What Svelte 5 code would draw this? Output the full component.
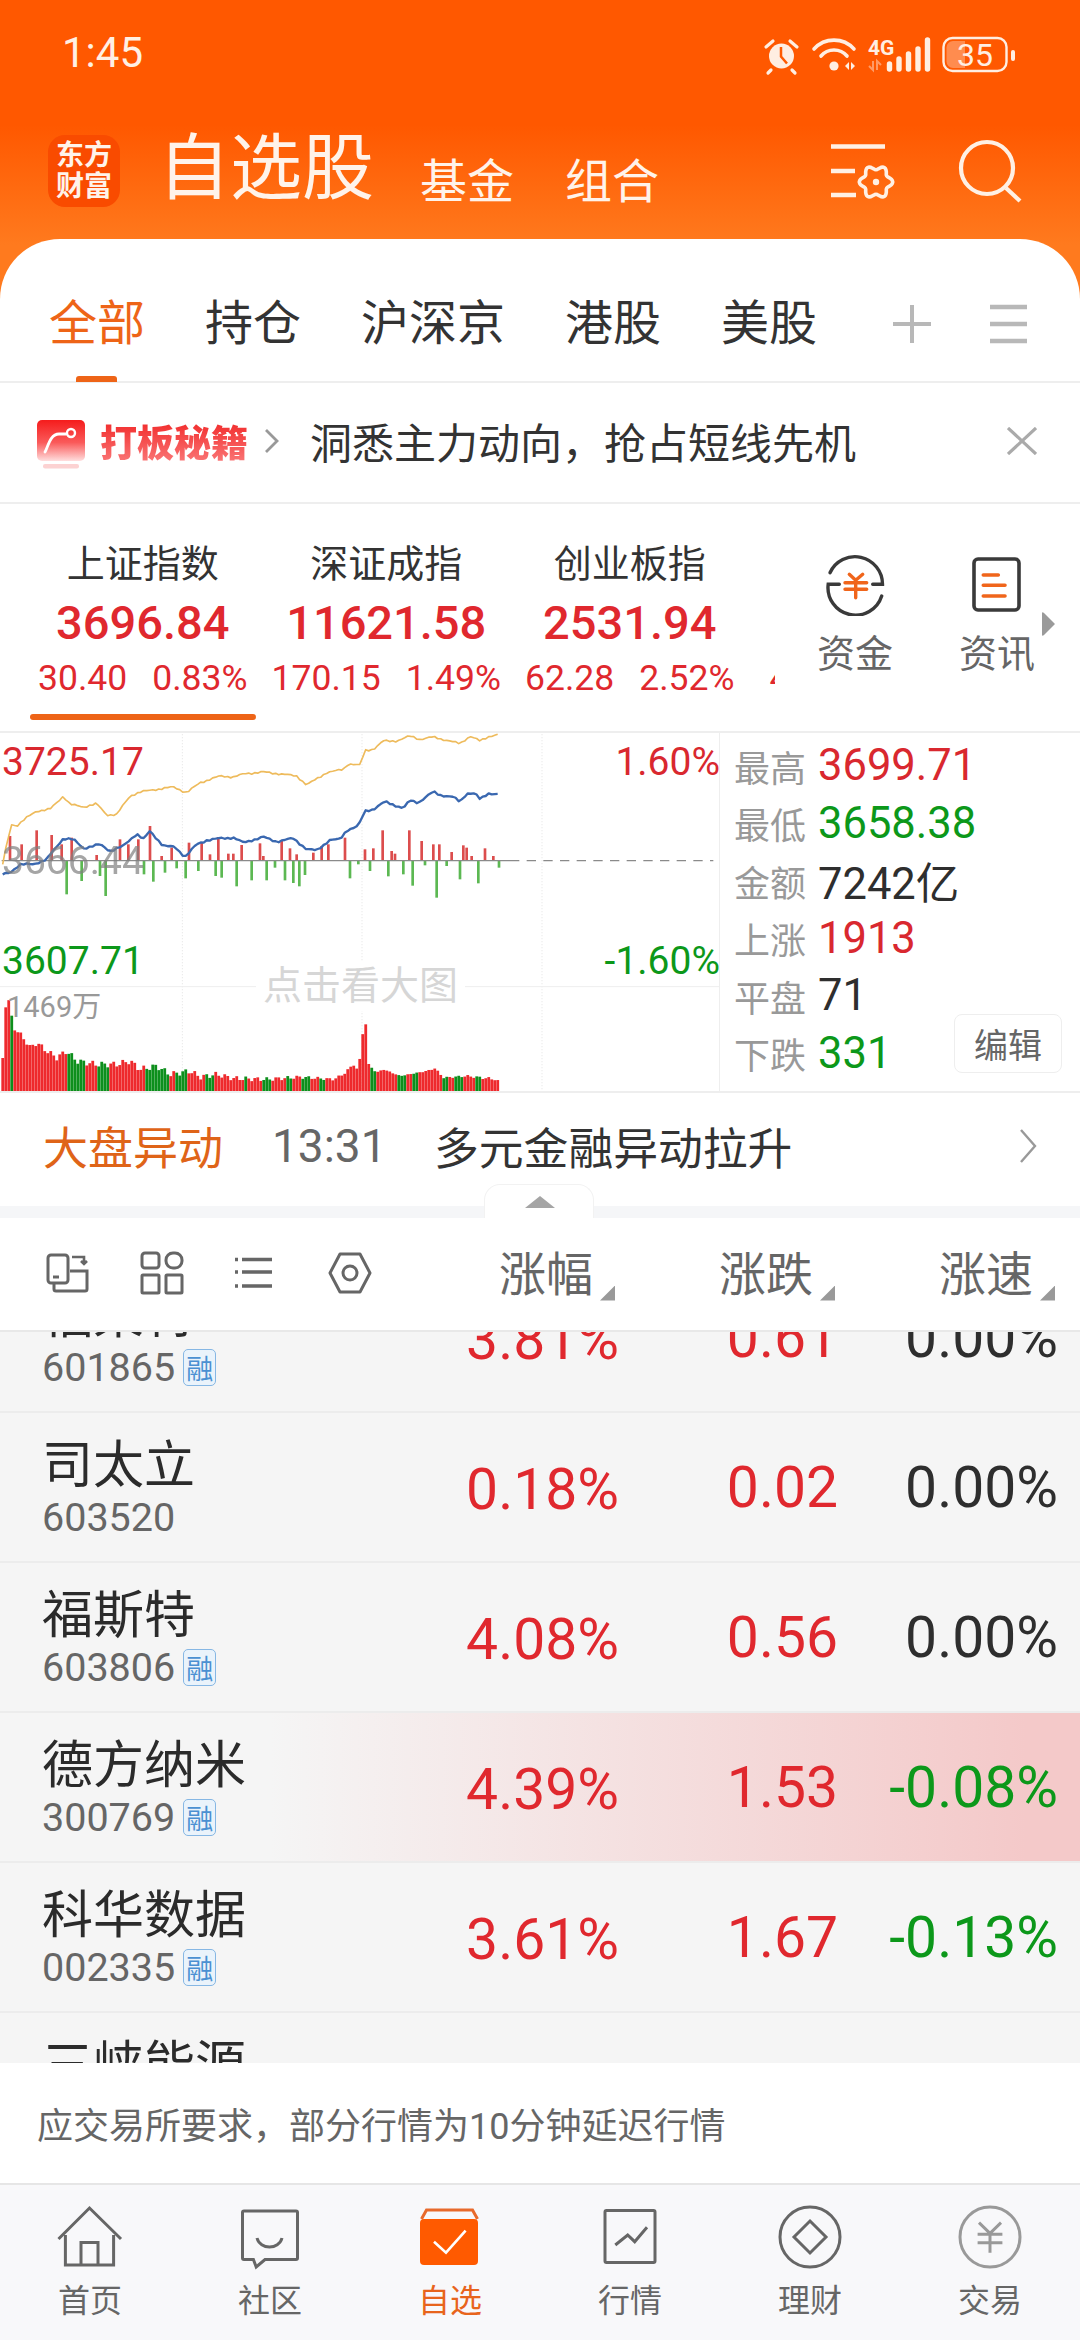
<script lang="ts">
  const topTabs = [
    { label: "全部", active: true },
    { label: "持仓" },
    { label: "沪深京" },
    { label: "港股" },
    { label: "美股" },
  ];

  const indexes = [
    { name: "上证指数", value: "3696.84", diff: "30.40", pct: "0.83%", active: true },
    { name: "深证成指", value: "11621.58", diff: "170.15", pct: "1.49%" },
    { name: "创业板指", value: "2531.94", diff: "62.28", pct: "2.52%" },
  ];

  const stats = [
    { label: "最高", value: "3699.71", tone: "up" },
    { label: "最低", value: "3658.38", tone: "down" },
    { label: "金额", value: "7242亿", tone: "flat" },
    { label: "上涨", value: "1913", tone: "up" },
    { label: "平盘", value: "71", tone: "flat" },
    { label: "下跌", value: "331", tone: "down" },
  ];

  const stocks = [
    { name: "福莱特", code: "601865", margin: true, pct: "3.81%", diff: "0.61", speed: "0.00%", speedTone: "flat" },
    { name: "司太立", code: "603520", margin: false, pct: "0.18%", diff: "0.02", speed: "0.00%", speedTone: "flat" },
    { name: "福斯特", code: "603806", margin: true, pct: "4.08%", diff: "0.56", speed: "0.00%", speedTone: "flat" },
    { name: "德方纳米", code: "300769", margin: true, pct: "4.39%", diff: "1.53", speed: "-0.08%", speedTone: "down", hot: true },
    { name: "科华数据", code: "002335", margin: true, pct: "3.61%", diff: "1.67", speed: "-0.13%", speedTone: "down" },
    { name: "三峡能源", code: "600905", margin: true, pct: "", diff: "", speed: "", speedTone: "flat" },
  ];

  const navItems = ["首页", "社区", "自选", "行情", "理财", "交易"];

  // chart data is in chart units: 3 units = 1px
  const yellowPts = [[8,400],[20,340],[35,280],[50,285],[80,260],[110,240],[150,235],[190,195],[210,220],[250,228],[290,218],[320,252],[350,250],[390,195],[420,183],[470,175],[520,168],[560,185],[600,155],[660,135],[700,138],[735,128],[790,123],[850,130],[890,135],[920,162],[980,125],[1030,115],[1045,98],[1080,103],[1095,58],[1120,55],[1150,30],[1190,30],[1230,15],[1260,25],[1300,18],[1340,28],[1380,38],[1410,15],[1440,30],[1470,15],[1497,10]];
  const bluePts = [[8,430],[30,425],[60,400],[100,400],[140,385],[190,322],[220,325],[250,352],[300,340],[330,360],[370,345],[410,308],[430,325],[450,300],[490,345],[525,348],[555,378],[590,340],[620,328],[660,322],[700,320],[730,335],[790,318],[830,332],[880,322],[920,355],[950,358],[990,327],[1020,325],[1040,298],[1075,285],[1095,240],[1120,235],[1155,212],[1210,232],[1230,208],[1255,215],[1300,182],[1320,192],[1360,198],[1380,213],[1400,187],[1425,187],[1440,205],[1465,187],[1497,190]];

  const redBars = [[30,315],[65,340],[110,298],[155,312],[185,340],[215,320],[290,372],[360,325],[385,340],[415,325],[450,285],[485,375],[515,350],[567,335],[605,335],[630,370],[655,318],[685,368],[700,368],[725,342],[780,337],[790,375],[845,328],[870,352],[890,370],[940,365],[965,345],[985,340],[1035,320],[1095,355],[1120,352],[1148,298],[1175,360],[1185,368],[1228,298],[1265,330],[1300,340],[1318,340],[1355,363],[1390,343],[1400,350],[1415,375],[1455,352],[1480,375]];
  const greenBars = [[200,490],[245,450],[300,435],[317,495],[432,430],[460,452],[495,425],[530,412],[557,442],[595,420],[647,435],[665,440],[710,466],[755,448],[800,448],[825,410],[855,448],[880,456],[898,466],[915,432],[1050,442],[1075,400],[1110,420],[1165,436],[1210,430],[1238,464],[1275,403],[1310,500],[1340,405],[1380,445],[1435,457],[1497,410]];

  const volumeEnvelope = [[8,980],[20,770],[30,840],[45,895],[70,920],[90,950],[110,935],[140,960],[170,980],[200,960],[230,990],[290,1000],[350,1000],[390,990],[420,1015],[470,1005],[510,1030],[570,1020],[600,1038],[650,1030],[700,1042],[800,1045],[900,1038],[1000,1045],[1030,1030],[1060,1000],[1075,1020],[1095,850],[1105,1000],[1130,1025],[1150,1015],[1200,1035],[1280,1020],[1305,1012],[1330,1040],[1400,1035],[1490,1045],[1500,1065]];
  const greenRuns = [[28,42],[205,255],[290,330],[440,510],[530,560],[620,640],[730,745],[790,815],[860,880],[900,930],[960,975],[1110,1130],[1190,1215],[1240,1250],[1325,1345],[1365,1390],[1425,1440],[1495,1505]];

  function lerp(pts: number[][], x: number) {
    for (let i = 1; i < pts.length; i++) {
      if (x <= pts[i][0]) {
        const [x0, y0] = pts[i - 1];
        const [x1, y1] = pts[i];
        return y0 + ((y1 - y0) * (x - x0)) / (x1 - x0);
      }
    }
    return pts[pts.length - 1][1];
  }

  function wiggle(pts: number[][]) {
    const out: string[] = [];
    for (let x = pts[0][0]; x <= pts[pts.length - 1][0]; x += 9) {
      const y = lerp(pts, x) + Math.sin(x * 1.7) * 1.8 + Math.sin(x * 0.61) * 1.6;
      out.push(`${x},${y.toFixed(1)}`);
    }
    return out.join(" ");
  }

  const volumes: { x: number; top: number; green: boolean }[] = [];
  for (let x = 8; x <= 1500; x += 9) {
    const jitter = x < 1085 || x > 1105 ? Math.sin(x * 2.3) * 5 + Math.sin(x * 0.9) * 4 : 0;
    volumes.push({
      x,
      top: Math.min(lerp(volumeEnvelope, x) + jitter, 1072),
      green: greenRuns.some(([a, b]) => x >= a && x <= b),
    });
  }

  function gearPath(cx: number, cy: number, r: number) {
    let d = "";
    for (let i = 0; i <= 72; i++) {
      const t = (i / 72) * Math.PI * 2;
      const rr = r + 2.2 * Math.cos(t * 6);
      d += `${i ? "L" : "M"}${(cx + rr * Math.cos(t)).toFixed(1)} ${(cy + rr * Math.sin(t)).toFixed(1)}`;
    }
    return d + "Z";
  }
</script>

<div class="phone">
  <header class="top">
    <div class="status">
      <span class="time">1:45</span>
      <svg class="status-icons" width="300" height="60" viewBox="0 0 300 60" fill="none">
        <circle cx="41.5" cy="33" r="12.5" fill="#ffeee2" />
        <path d="M41 24v9.5l6 7" stroke="#ff5a00" stroke-width="2.5" />
        <path d="M26 24l7-6M57 24l-7-6M31 47l-3 3M52 47l3 3" stroke="#ffeee2" stroke-width="3.2" stroke-linecap="round" />
        <path d="M74 26a27 27 0 0 1 40 0" stroke="#ffeee2" stroke-width="3.6" stroke-linecap="round" />
        <path d="M81 33a17 17 0 0 1 26 0" stroke="#ffeee2" stroke-width="3.6" stroke-linecap="round" />
        <circle cx="94" cy="43" r="4.6" fill="#ffeee2" />
        <path d="M109 39v8l-4-4zM111 39v8l4-4z" fill="#ffeee2" />
        <text x="128" y="32" class="net">4G</text>
        <path d="M133 38v9l-4-4M137 47v-9l4 4" stroke="#ffeee2" stroke-opacity=".45" stroke-width="2" />
        <path d="M149.5 41v5M159 36v10M168.500 31v15M178 26v20M187.500 17v29" stroke="#ffeee2" stroke-width="5.4" stroke-linecap="round" />
        <rect x="203.500" y="15" width="63" height="33" rx="9" stroke="#ffeee2" stroke-width="2.400" />
        <path d="M213 18h12v27h-12a6.500 6.500 0 0 1-6.500-6.500v-14a6.500 6.500 0 0 1 6.500-6.500z" fill="#ffeee2" fill-opacity=".35" />
        <text x="235" y="43" text-anchor="middle" class="batt">35</text>
        <rect x="271" y="27" width="4" height="11" rx="2" fill="#ffeee2" />
      </svg>
    </div>

    <div class="title-row">
      <div class="logo"><span>东方</span><span>财富</span></div>
      <h1>自选股</h1>
      <span class="title-link first">基金</span>
      <span class="title-link">组合</span>
      <svg class="title-icons" width="230" height="80" viewBox="0 0 230 80" fill="none" stroke="#fff0e4">
        <path d="M21 16.500h54M21 41h24M21 65h25" stroke-width="4.600" />
        <path d={gearPath(66, 52, 14.500)} stroke-width="3.600" />
        <circle cx="66" cy="52" r="3.200" fill="#fff0e4" stroke="none" />
        <circle cx="177" cy="38" r="26" stroke-width="4.200" />
        <path d="M196 58l14 13" stroke-width="4.200" />
      </svg>
    </div>

    <nav class="tabs">
      {#each topTabs as tab}
        <div class="tab" class:active={tab.active}>{tab.label}</div>
      {/each}
      <svg class="tab-tools" width="134" height="44" viewBox="0 0 134 44" fill="none" stroke="#b8b8b8" stroke-width="4">
        <path d="M0 20h38M19 1v38" />
        <path d="M97 3h37M97 20h37M97 37h37" stroke-width="4.600" />
      </svg>
    </nav>
  </header>

  <section class="promo">
    <svg class="promo-icon" width="50" height="52" viewBox="0 0 50 52" fill="none">
      <defs>
        <linearGradient id="promoFill" x1="0" y1="0" x2="0" y2="1">
          <stop offset="0" stop-color="#f51c1c" />
          <stop offset=".55" stop-color="#fa5a5a" />
          <stop offset="1" stop-color="#ffdede" />
        </linearGradient>
      </defs>
      <rect x="1" y="0" width="48" height="41" rx="5" fill="url(#promoFill)" />
      <rect x="7" y="44" width="36" height="4.500" rx="2" fill="#fcd2d2" />
      <path d="M9 32c3-5 5-18 14-18h7" stroke="#fff" stroke-width="2.800" stroke-linecap="round" />
      <circle cx="35" cy="13" r="4" stroke="#fff" stroke-width="2.400" />
    </svg>
    <span class="promo-name">打板秘籍</span>
    <svg class="promo-arrow" width="16" height="26" viewBox="0 0 16 26" fill="none" stroke="#999" stroke-width="2.800"><path d="M2 2l11 11L2 24" /></svg>
    <span class="promo-text">洞悉主力动向，抢占短线先机</span>
    <svg class="promo-close" width="30" height="28" viewBox="0 0 30 28" fill="none" stroke="#aaa" stroke-width="3.200"><path d="M1 1l28 26M29 1L1 27" /></svg>
  </section>

  <section class="market">
    <div class="index-strip">
      {#each indexes as item}
        <div class="index" class:active={item.active}>
          <div class="index-name">{item.name}</div>
          <div class="index-value">{item.value}</div>
          <div class="index-change"><span>{item.diff}</span><span>{item.pct}</span></div>
        </div>
      {/each}
      <div class="index next"><div class="index-change"><span>4</span></div></div>
    </div>
    <div class="shortcuts">
      <div class="shortcut">
        <svg width="64" height="64" viewBox="0 0 64 64" fill="none" stroke="#3a3a3a" stroke-width="3.400" stroke-linecap="round">
          <path d="M7 20.700A27.500 27.500 0 0 1 59.500 32.300H49.700" />
          <path d="M16.300 32.300H5.200A27.500 27.500 0 0 0 58.700 44" />
          <path d="M26.300 22.300l6.400 6 7-6M22 30.700h21.700M22 37.300h21.700M32.700 28.300v17.400" stroke="#f0651b" />
        </svg>
        <span>资金</span>
      </div>
      <div class="shortcut">
        <svg width="64" height="64" viewBox="0 0 64 64" fill="none" stroke="#3a3a3a" stroke-width="3.600" stroke-linecap="round">
          <rect x="9" y="7" width="45" height="51" rx="4" />
          <path d="M18.300 23h15M18.300 33.300H40M18.300 44H40" stroke="#f0651b" />
        </svg>
        <span>资讯</span>
      </div>
      <svg class="more" width="16" height="26" viewBox="0 0 16 26"><path d="M2 2c0-1 1-1 2 0l10 10c1 1 1 1 0 2L4 24c-1 1-2 1-2 0z" fill="#9a9a9a" /></svg>
    </div>
  </section>

  <section class="chart-row">
    <div class="chart">
      <svg width="720" height="358" viewBox="0 6 2160 1074" fill="none">
        <path d="M547 0V1080M1086 0V1080M1626 0V1080" stroke="#e9e9e9" stroke-width="3" stroke-dasharray="4 5" />
        <path d="M0 767H2160" stroke="#eeeeee" stroke-width="3" />
        {#each redBars as [x, top]}
          <rect x={x - 4} y={top} width="8" height={389 - top} fill="#dc4d4d" />
        {/each}
        {#each greenBars as [x, bottom]}
          <rect x={x - 4} y="389" width="8" height={bottom - 389} fill="#5cb852" />
        {/each}
        <path d="M5 389H1530" stroke="#8a8a8a" stroke-width="4" />
        <path d="M1530 389H2140" stroke="#8a8a8a" stroke-width="4" stroke-dasharray="28 22" />
        {#each volumes as bar}
          <rect x={bar.x - 4} y={bar.top} width="8.400" height={1080 - bar.top} fill={bar.green ? "#0d8f1c" : "#ee2a2d"} />
        {/each}
        <polyline points={wiggle(yellowPts)} stroke="#eebb5c" stroke-width="5" stroke-linejoin="round" />
        <polyline points={wiggle(bluePts)} stroke="#3a68b0" stroke-width="7" stroke-linejoin="round" />
      </svg>
      <span class="axis hi left">3725.17</span>
      <span class="axis hi right">1.60%</span>
      <span class="axis mid left">3666.44</span>
      <span class="axis lo left">3607.71</span>
      <span class="axis lo right">-1.60%</span>
      <span class="volume">1469万</span>
      <span class="hint">点击看大图</span>
    </div>
    <div class="stats">
      {#each stats as stat}
        <div class="stat">
          <span class="stat-label">{stat.label}</span>
          <span class="stat-value {stat.tone}">{stat.value}</span>
        </div>
      {/each}
      <button class="edit">编辑</button>
    </div>
  </section>

  <section class="alert">
    <span class="alert-tag">大盘异动</span>
    <span class="alert-time">13:31</span>
    <span class="alert-text">多元金融异动拉升</span>
    <svg class="alert-arrow" width="18" height="34" viewBox="0 0 18 34" fill="none" stroke="#999" stroke-width="2.400"><path d="M2 1l14 16L2 33" /></svg>
  </section>

  <div class="fold">
    <div class="fold-handle"><i></i></div>
  </div>

  <div class="toolbar">
    <div class="tools">
      <svg width="44" height="44" viewBox="0 0 44 44" fill="none" stroke="#666" stroke-width="3">
        <rect x="2" y="4" width="20" height="28" rx="3" />
        <path d="M7 26h6" />
        <path d="M24 20h17v18a2 2 0 0 1-2 2H10a2 2 0 0 1-2-2v-5" />
        <path d="M26 6h12v7M35 10l3 3 3-3" stroke-width="2.600" />
      </svg>
      <svg width="44" height="44" viewBox="0 0 44 44" fill="none" stroke="#666" stroke-width="3">
        <rect x="2" y="2" width="17" height="15" rx="3" />
        <rect x="26" y="2" width="16" height="15" rx="7" />
        <rect x="2" y="24" width="17" height="18" rx="1" />
        <rect x="26" y="24" width="16" height="18" rx="1" />
      </svg>
      <svg width="44" height="44" viewBox="0 0 44 44" fill="none" stroke="#666" stroke-width="3.400">
        <path d="M8 8.500h30M8 21h30M8 35h30" />
        <path d="M1 8.500h3M1 21h3M1 35h3" stroke-width="3.600" />
      </svg>
      <svg width="44" height="44" viewBox="0 0 44 44" fill="none" stroke="#666" stroke-width="3" stroke-linejoin="round">
        <path d="M2 22L12 3h20l10 19-10 19H12z" />
        <circle cx="22" cy="22" r="7" />
      </svg>
    </div>
    <div class="col-head">涨幅<i></i></div>
    <div class="col-head">涨跌<i></i></div>
    <div class="col-head">涨速<i></i></div>
  </div>

  <div class="list">
    <div class="list-inner">
      {#each stocks as stock}
        <div class="stock" class:hot={stock.hot}>
          <div class="stock-id">
            <div class="stock-name">{stock.name}</div>
            <div class="stock-code">{stock.code}{#if stock.margin}<span class="margin-tag">融</span>{/if}</div>
          </div>
          <div class="cell pct">{stock.pct}</div>
          <div class="cell diff">{stock.diff}</div>
          <div class="cell speed {stock.speedTone}">{stock.speed}</div>
        </div>
      {/each}
    </div>
  </div>

  <div class="notice">应交易所要求，部分行情为10分钟延迟行情</div>

  <nav class="bottom-nav">
    {#each navItems as label, i}
      <div class="nav-item" class:current={i === 2}>
        <svg width="70" height="70" viewBox="0 0 70 70" fill="none" stroke="#666" stroke-width="3">
          {#if i === 0}
            <path d="M3.500 36L34.500 5 66 36" />
            <path d="M10.400 32v30h48.200V32M26 62V39.500h17V62" />
          {:else if i === 1}
            <path d="M9 8h52a1.500 1.500 0 0 1 1.500 1.500V55a1.500 1.500 0 0 1-1.500 1.500H30l-8.800 7.500-2.800-7.500H9A1.500 1.500 0 0 1 7.500 55V9.500A1.500 1.500 0 0 1 9 8z" />
            <path d="M22 35c3 12 22 12 25 0" />
          {:else if i === 2}
            <path d="M6.500 16l5-9h46l5 9" stroke="#e86a2c" />
            <rect x="5" y="16" width="58" height="46" rx="4" fill="#ff5a00" stroke="none" />
            <path d="M19 38.700l12 11L50.600 27.700" stroke="#fff" stroke-width="2.600" />
          {:else if i === 3}
            <rect x="10" y="7.500" width="50" height="52" rx="1.500" />
            <path d="M20.300 42l12.400-10 7 6.700L52 24.300" />
          {:else if i === 4}
            <circle cx="35" cy="34" r="30" />
            <path d="M35 18l16 16-16 16-16-16z" />
          {:else}
            <g stroke="#999">
              <circle cx="35" cy="34" r="30" />
              <path d="M24 19.700l11 10.600 11-10.600M22.600 31.300h24.800M22.600 39.700h24.800M35 30.300v19.400" />
            </g>
          {/if}
        </svg>
        <span>{label}</span>
      </div>
    {/each}
  </nav>
</div>

<style>
  :global(body) {
    margin: 0;
    background: #fff;
  }

  .phone {
    width: 1080px;
    height: 2340px;
    overflow: hidden;
    display: flex;
    flex-direction: column;
    background: #fff;
    color: #333;
    font-family: Roboto, "Noto Sans CJK SC", sans-serif;
  }

  .top {
    background: linear-gradient(180deg, #ff5800 0, #ff5800 125px, #ff7a1e 245px);
  }

  .status {
    height: 105px;
    display: flex;
    align-items: center;
    justify-content: space-between;
    padding: 0 40px 0 62px;
    box-sizing: border-box;
  }

  .time {
    color: #fff0e4;
    font-size: 42px;
  }

  .net {
    fill: #ffeee2;
    font-size: 21px;
    font-weight: 700;
  }

  .batt {
    fill: #ffeee2;
    font-size: 32px;
  }

  .title-row {
    height: 134px;
    display: flex;
    align-items: flex-start;
    padding-left: 48px;
    color: #fff3ea;
  }

  .logo {
    width: 72px;
    height: 72px;
    margin-top: 30px;
    border-radius: 17px;
    background: #f94b00;
    display: flex;
    flex-direction: column;
    align-items: center;
    justify-content: center;
    font-size: 28px;
    line-height: 31px;
    font-weight: 700;
  }

  h1 {
    margin: 22px 0 0 38px;
    font-size: 72px;
    line-height: 84px;
    font-weight: 400;
  }

  .title-link {
    margin: 47px 0 0 51px;
    font-size: 47px;
    line-height: 60px;
  }

  .title-link.first {
    margin-left: 46px;
  }

  .title-icons {
    margin: 25px 40px 0 auto;
  }

  .tabs {
    height: 144px;
    box-sizing: border-box;
    display: flex;
    align-items: flex-start;
    padding: 53px 0 0 49px;
    gap: 60px;
    background: #fff;
    border-radius: 60px 60px 0 0;
    border-bottom: 2px solid #eeeeee;
    position: relative;
  }

  .tab {
    font-size: 48px;
    line-height: 64px;
    color: #333;
    position: relative;
  }

  .tab.active {
    color: #ee6417;
  }

  .tab.active::after {
    content: "";
    position: absolute;
    left: 27px;
    width: 41px;
    top: 84px;
    height: 6px;
    border-radius: 3px 3px 0 0;
    background: #ee6417;
  }

  .tab-tools {
    position: absolute;
    left: 893px;
    top: 65px;
  }

  .promo {
    height: 121px;
    box-sizing: border-box;
    display: flex;
    align-items: center;
    padding: 0 43px 4px 36px;
    border-bottom: 2px solid #eeeeee;
  }

  .promo-icon {
    margin-top: 10px;
  }

  .promo-name {
    margin-left: 14px;
    font-size: 37px;
    font-weight: 900;
    background: linear-gradient(180deg, #f01e1e, #fb8080);
    -webkit-background-clip: text;
    background-clip: text;
    color: transparent;
  }

  .promo-arrow {
    margin-left: 16px;
  }

  .promo-text {
    margin-left: 30px;
    font-size: 42px;
    color: #333;
  }

  .promo-close {
    margin-left: auto;
  }

  .market {
    height: 229px;
    box-sizing: border-box;
    display: flex;
    border-bottom: 2px solid #eeeeee;
  }

  .index-strip {
    width: 775px;
    padding-left: 21px;
    box-sizing: border-box;
    overflow: hidden;
    display: flex;
  }

  .index {
    flex: 0 0 243.500px;
    padding-top: 36px;
    box-sizing: border-box;
    text-align: center;
    position: relative;
  }

  .index.active::after {
    content: "";
    position: absolute;
    left: 9px;
    right: 9px;
    top: 210px;
    height: 6px;
    border-radius: 3px;
    background: #ee6417;
  }

  .index.next {
    padding-top: 151px;
    text-align: left;
    padding-left: 18px;
  }

  .index-name {
    font-size: 38px;
    line-height: 48px;
    color: #333;
  }

  .index-value {
    margin-top: 5px;
    font-size: 47px;
    line-height: 60px;
    font-weight: 500;
    color: #e0282e;
  }

  .index-change {
    margin-top: 2px;
    display: flex;
    justify-content: center;
    gap: 25px;
    font-size: 35.500px;
    line-height: 46px;
    color: #e0282e;
  }

  .index.next .index-change {
    justify-content: flex-start;
    margin-top: 0;
  }

  .shortcuts {
    display: flex;
    margin-left: 9px;
    position: relative;
  }

  .shortcut {
    width: 142px;
    padding-top: 48px;
    display: flex;
    flex-direction: column;
    align-items: center;
    gap: 15px;
    font-size: 38px;
    line-height: 46px;
    color: #666;
  }

  .more {
    position: absolute;
    left: 256px;
    top: 107px;
  }

  .chart-row {
    height: 358px;
    display: flex;
    border-bottom: 2px solid #eeeeee;
  }

  .chart {
    width: 720px;
    position: relative;
    border-right: 1px solid #eeeeee;
    box-sizing: border-box;
    overflow: hidden;
  }

  .chart svg {
    display: block;
  }

  .axis {
    position: absolute;
    font-size: 39px;
    line-height: 44px;
  }

  .axis.left {
    left: 2px;
  }

  .axis.right {
    right: -1px;
  }

  .axis.hi {
    top: 7px;
    color: #d9282f;
  }

  .axis.lo {
    top: 206px;
    color: #0c981a;
  }

  .axis.mid {
    top: 106px;
    color: #808080;
    opacity: 0.7;
  }

  .volume {
    position: absolute;
    left: 7px;
    top: 254px;
    font-size: 29px;
    line-height: 40px;
    color: #999;
  }

  .hint {
    position: absolute;
    left: 256px;
    top: 228px;
    padding: 0 7px;
    background: #fff;
    font-size: 39px;
    line-height: 50px;
    color: #d6d6d6;
  }

  .stats {
    flex: 1;
    padding: 4px 0 0 14px;
    position: relative;
  }

  .stat {
    height: 57.500px;
    display: flex;
    align-items: center;
    gap: 12px;
  }

  .stat-label {
    font-size: 36px;
    color: #999;
  }

  .stat-value {
    font-size: 43.500px;
  }

  .up {
    color: #d9282f;
  }

  .down {
    color: #0c981a;
  }

  .flat {
    color: #2e2e2e;
  }

  .edit {
    position: absolute;
    left: 234px;
    top: 281px;
    width: 108px;
    height: 59px;
    padding: 0;
    background: #fff;
    border: 1px solid #eeeeee;
    border-radius: 8px;
    font: inherit;
    font-size: 34px;
    color: #666;
  }

  .alert {
    height: 113px;
    box-sizing: border-box;
    display: flex;
    align-items: center;
    padding: 0 43px 8px;
    font-size: 44.800px;
  }

  .alert-tag {
    color: #df6418;
    font-size: 45px;
  }

  .alert-time {
    margin-left: 49px;
    width: 162px;
    font-size: 46px;
    color: #666;
  }

  .alert-text {
    color: #333;
  }

  .alert-arrow {
    margin-left: auto;
  }

  .fold {
    height: 12px;
    background: #f5f6f8;
    position: relative;
  }

  .fold-handle {
    position: absolute;
    left: 484px;
    top: -22px;
    width: 110px;
    height: 34px;
    box-sizing: border-box;
    background: #fff;
    border: 1px solid #f2f2f2;
    border-bottom: 0;
    border-radius: 16px 16px 0 0;
  }

  .fold-handle i {
    position: absolute;
    left: 40px;
    top: 11px;
    border-left: 15px solid transparent;
    border-right: 15px solid transparent;
    border-bottom: 12px solid #a5a5a5;
  }

  .toolbar {
    height: 114px;
    flex: none;
    box-sizing: border-box;
    display: flex;
    align-items: center;
    padding: 0 25px 8px 0;
    border-bottom: 2px solid #e8e8e8;
    background: #fff;
    position: relative;
    z-index: 1;
  }

  .tools {
    flex: 1;
    display: flex;
    gap: 50px;
    padding: 6px 0 0 46px;
  }

  .col-head {
    width: 220px;
    box-sizing: border-box;
    padding-right: 22px;
    text-align: right;
    font-size: 47px;
    color: #666;
    position: relative;
  }

  .col-head:nth-child(2) {
    width: 219px;
  }

  .col-head i {
    position: absolute;
    right: 0;
    bottom: 4px;
    width: 15px;
    height: 15px;
    background: #999;
    clip-path: polygon(100% 0, 100% 100%, 0 100%);
  }

  .list {
    flex: 1;
    min-height: 0;
    overflow: hidden;
    background: #f5f5f5;
  }

  .list-inner {
    margin-top: -69px;
  }

  .stock {
    height: 150px;
    box-sizing: border-box;
    display: flex;
    padding-right: 22px;
    border-bottom: 2px solid #ececec;
  }

  .stock.hot {
    background: linear-gradient(90deg, rgba(244, 200, 200, 0) 25%, #f4c9c9 95%);
  }

  .stock-id {
    flex: 1;
    padding: 24px 0 0 42px;
  }

  .stock-name {
    font-size: 51px;
    line-height: 58px;
    color: #2b2b2b;
  }

  .stock-code {
    display: flex;
    align-items: center;
    gap: 8px;
    height: 44px;
    margin-top: 0;
    font-size: 39.500px;
    color: #666;
  }

  .margin-tag {
    width: 33px;
    height: 37px;
    box-sizing: border-box;
    display: flex;
    align-items: center;
    justify-content: center;
    border: 1px solid #86b7e4;
    border-radius: 5px;
    background: #eaf3fb;
    color: #4a90d2;
    font-size: 27px;
  }

  .cell {
    width: 219px;
    padding-top: 44px;
    text-align: right;
    font-size: 57px;
    line-height: 62px;
  }

  .speed {
    width: 220px;
  }

  .pct,
  .diff {
    color: #e0282e;
  }

  .pct {
    padding-top: 46px;
  }

  .notice {
    flex: none;
    height: 120px;
    display: flex;
    align-items: center;
    padding-left: 37px;
    font-size: 36px;
    color: #666;
    background: #fff;
    position: relative;
  }

  .bottom-nav {
    flex: none;
    height: 157px;
    box-sizing: border-box;
    display: flex;
    padding-top: 18px;
    background: #f8f8fa;
    border-top: 2px solid #e6e6e6;
  }

  .nav-item {
    flex: 1;
    display: flex;
    flex-direction: column;
    align-items: center;
    font-size: 32px;
    line-height: 40px;
    color: #666;
  }

  .nav-item span {
    margin-top: 8px;
  }

  .nav-item.current {
    color: #e8641c;
  }
</style>
